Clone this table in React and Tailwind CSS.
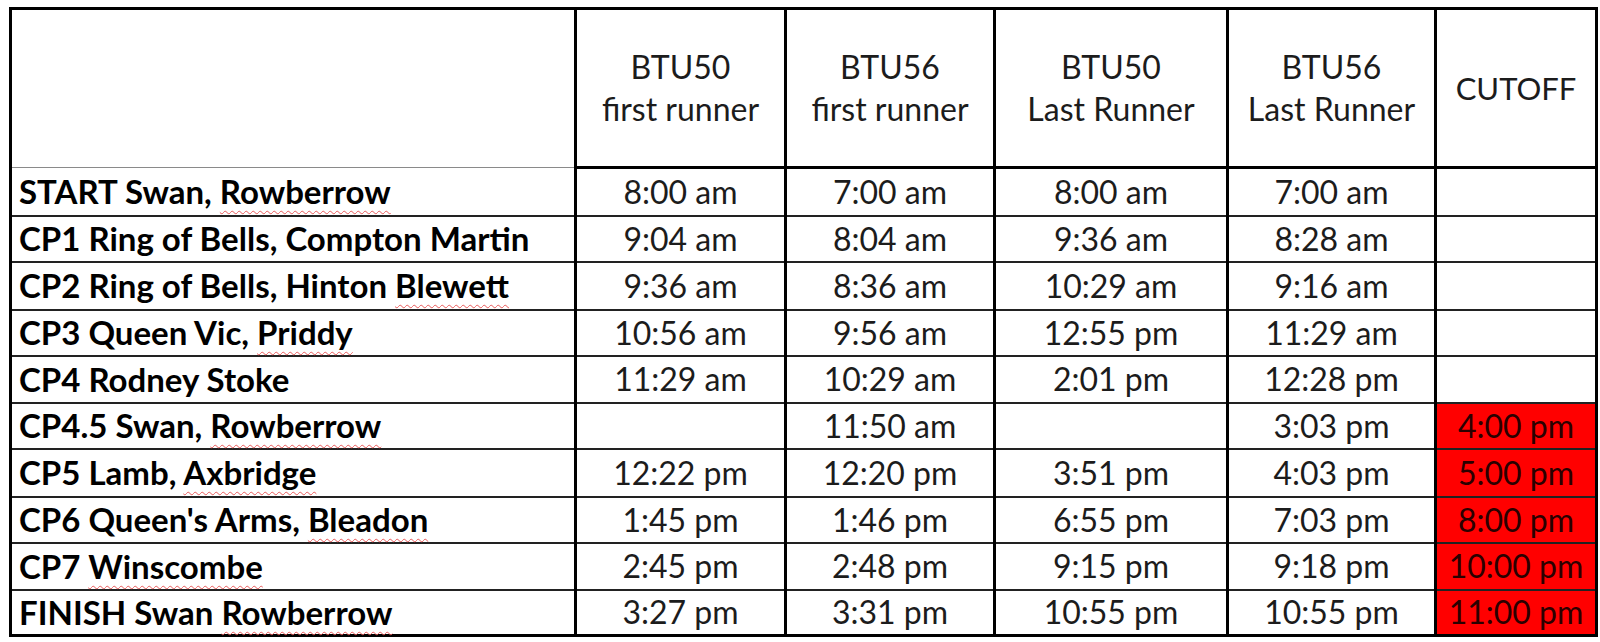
import React from "react";

const rows = [
  { name: [["START Swan, ", false], ["Rowberrow", true]], t: ["8:00 am", "7:00 am", "8:00 am", "7:00 am"], c: "" },
  { name: [["CP1 Ring of Bells, Compton Martin", false]], t: ["9:04 am", "8:04 am", "9:36 am", "8:28 am"], c: "" },
  { name: [["CP2 Ring of Bells, Hinton ", false], ["Blewett", true]], t: ["9:36 am", "8:36 am", "10:29 am", "9:16 am"], c: "" },
  { name: [["CP3 Queen Vic, ", false], ["Priddy", true]], t: ["10:56 am", "9:56 am", "12:55 pm", "11:29 am"], c: "" },
  { name: [["CP4 Rodney Stoke", false]], t: ["11:29 am", "10:29 am", "2:01 pm", "12:28 pm"], c: "" },
  { name: [["CP4.5 Swan, ", false], ["Rowberrow", true]], t: ["", "11:50 am", "", "3:03 pm"], c: "4:00 pm" },
  { name: [["CP5 Lamb, ", false], ["Axbridge", true]], t: ["12:22 pm", "12:20 pm", "3:51 pm", "4:03 pm"], c: "5:00 pm" },
  { name: [["CP6 Queen's Arms, ", false], ["Bleadon", true]], t: ["1:45 pm", "1:46 pm", "6:55 pm", "7:03 pm"], c: "8:00 pm" },
  { name: [["CP7 ", false], ["Winscombe", true]], t: ["2:45 pm", "2:48 pm", "9:15 pm", "9:18 pm"], c: "10:00 pm" },
  { name: [["FINISH Swan ", false], ["Rowberrow", true]], t: ["3:27 pm", "3:31 pm", "10:55 pm", "10:55 pm"], c: "11:00 pm" },
];

const heights = [48, 46, 48, 46, 47, 46, 48, 46, 47, 46];

const headers = [
  ["BTU50", "first runner"],
  ["BTU56", "first runner"],
  ["BTU50", "Last Runner"],
  ["BTU56", "Last Runner"],
];

export default function App() {
  return (
    <div className="w-[1600px] h-[642px] bg-white pt-[7px] pl-[9px] font-['Lato',sans-serif] text-[#1c1c1c]">
      <table className="border-collapse table-fixed w-[1586px] border-[3px] border-black">
        <colgroup>
          <col className="w-[565px]" />
          <col className="w-[210px]" />
          <col className="w-[209px]" />
          <col className="w-[233px]" />
          <col className="w-[208px]" />
          <col className="w-[161px]" />
        </colgroup>
        <thead>
          <tr className="h-[159px]">
            <th className="border-b border-b-[#8a8a8a] p-0"></th>
            {headers.map((h, i) => (
              <th
                key={i}
                className="border-l-[3px] border-l-black border-b-[3px] border-b-black p-0 text-center font-normal text-[32px] leading-[42px]"
              >
                <div>{h[0]}</div>
                <div>{h[1]}</div>
              </th>
            ))}
            <th className="border-l-[3px] border-l-black border-b-[3px] border-b-black p-0 text-center font-normal text-[31px] leading-[42px]">
              CUTOFF
            </th>
          </tr>
        </thead>
        <tbody>
          {rows.map((r, i) => (
            <tr key={i} style={{ height: heights[i] }}>
              <td className="border-b-2 border-b-[#222] p-0 pl-[7px] text-left font-bold text-[33px] leading-none text-black whitespace-nowrap">
                {r.name.map(([txt, sq], j) =>
                  sq ? (
                    <span
                      key={j}
                      className="underline decoration-wavy decoration-[#e85a5a] decoration-1 underline-offset-[6px]"
                    >
                      {txt}
                    </span>
                  ) : (
                    <span key={j} className="whitespace-pre">{txt}</span>
                  )
                )}
              </td>
              {r.t.map((t, j) => (
                <td
                  key={j}
                  className="border-l-[3px] border-l-black border-b-2 border-b-[#222] p-0 text-center text-[32px] leading-none whitespace-nowrap"
                >
                  {t}
                </td>
              ))}
              <td
                className={
                  r.c
                    ? "border-l-[3px] border-l-black border-b-2 border-b-[#222] p-0 text-center text-[32px] leading-none whitespace-nowrap bg-[#ff0000] text-[#2a0000]"
                    : "border-l-[3px] border-l-black border-b-2 border-b-[#222] p-0 text-center text-[32px] leading-none whitespace-nowrap"
                }
              >
                {r.c}
              </td>
            </tr>
          ))}
        </tbody>
      </table>
    </div>
  );
}
